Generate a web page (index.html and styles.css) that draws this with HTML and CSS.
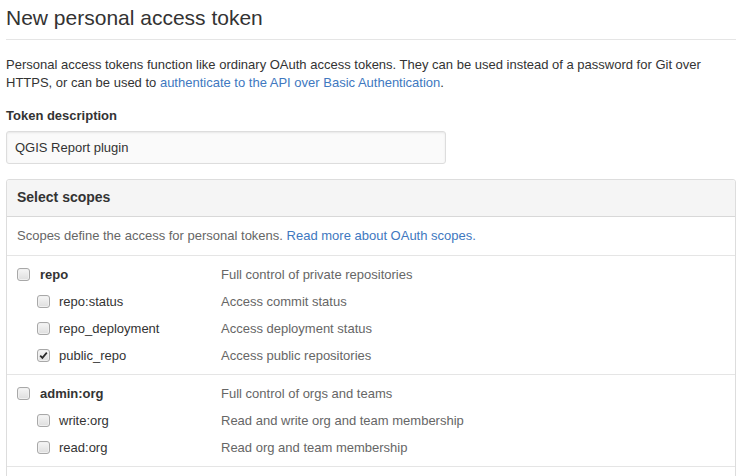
FILE: index.html
```html
<!DOCTYPE html>
<html lang="en">
<head>
<meta charset="utf-8">
<title>New personal access token</title>
<link rel="stylesheet" href="styles.css">
</head>
<body>
<div class="page">
  <h1 class="subhead">New personal access token</h1>
  <p class="intro">Personal access tokens function like ordinary OAuth access tokens. They can be used instead of a password for Git over HTTPS, or can be used to <a href="#">authenticate to the API over Basic Authentication</a>.</p>

  <label class="field-label" for="desc">Token description</label>
  <input class="field-input" id="desc" type="text" value="QGIS Report plugin">

  <div class="panel">
    <div class="panel-head">Select scopes</div>
    <div class="panel-note">Scopes define the access for personal tokens. <a href="#">Read more about OAuth scopes.</a></div>

    <div class="scope-group">
      <div class="scope-row">
        <span class="scope-name top"><span class="cb"></span>repo</span>
        <span class="scope-desc">Full control of private repositories</span>
      </div>
      <div class="scope-row">
        <span class="scope-name sub"><span class="cb"></span>repo:status</span>
        <span class="scope-desc">Access commit status</span>
      </div>
      <div class="scope-row">
        <span class="scope-name sub"><span class="cb"></span>repo_deployment</span>
        <span class="scope-desc">Access deployment status</span>
      </div>
      <div class="scope-row">
        <span class="scope-name sub"><span class="cb checked"><svg viewBox="0 0 13 13" width="13" height="13"><path d="M3.2 6.6 L5.4 8.9 L9.8 3.6" fill="none" stroke="#2a2a2a" stroke-width="1.7"/></svg></span>public_repo</span>
        <span class="scope-desc">Access public repositories</span>
      </div>
    </div>

    <div class="scope-group">
      <div class="scope-row">
        <span class="scope-name top"><span class="cb"></span>admin:org</span>
        <span class="scope-desc">Full control of orgs and teams</span>
      </div>
      <div class="scope-row">
        <span class="scope-name sub"><span class="cb"></span>write:org</span>
        <span class="scope-desc">Read and write org and team membership</span>
      </div>
      <div class="scope-row">
        <span class="scope-name sub"><span class="cb"></span>read:org</span>
        <span class="scope-desc">Read org and team membership</span>
      </div>
    </div>

    <div class="scope-group scope-more"></div>
  </div>
</div>
</body>
</html>
```

FILE: styles.css
```css
html { overflow: hidden; }
body {
  margin: 0;
  background: #fff;
  color: #333;
  font-family: "Liberation Sans", Arial, sans-serif;
  font-size: 13px;
  line-height: 18px;
}
a { color: #4078c0; text-decoration: none; }

.page {
  width: 730px;
  padding-left: 6px;
}

.subhead {
  margin: 0;
  padding: 2px 0 5px;
  font-size: 21px;
  font-weight: normal;
  line-height: 32px;
  color: #333;
  border-bottom: 1px solid #e5e5e5;
}

.intro {
  margin: 16px 0 15px;
}

.field-label {
  display: block;
  font-weight: bold;
  margin-bottom: 6px;
}

.field-input {
  display: block;
  box-sizing: border-box;
  width: 440px;
  height: 33px;
  margin: 0;
  padding: 0 8px;
  font-family: inherit;
  font-size: 13px;
  color: #333;
  background: #fafafa;
  border: 1px solid #ddd;
  border-radius: 3px;
  box-shadow: inset 0 1px 2px rgba(0,0,0,0.075);
  outline: none;
}

.panel {
  margin-top: 15px;
  border: 1px solid #ddd;
  border-radius: 3px;
}

.panel-head {
  padding: 9px 10px 11px;
  font-size: 14px;
  font-weight: bold;
  line-height: 16px;
  background: #f5f5f5;
  border-bottom: 1px solid #d8d8d8;
  border-radius: 3px 3px 0 0;
}

.panel-note {
  padding: 10px;
  color: #666;
}

.scope-group {
  border-top: 1px solid #e5e5e5;
  padding: 5px 10px;
}

.scope-more {
  height: 30px;
}

.scope-row {
  display: grid;
  grid-template-columns: 204px 1fr;
  line-height: 27px;
}

.scope-name {
  display: flex;
  align-items: center;
  color: #333;
}
.scope-name.top { font-weight: bold; }
.scope-name.sub { padding-left: 20px; }

.scope-desc { color: #666; }

.cb {
  box-sizing: border-box;
  width: 13px;
  height: 13px;
  margin-right: 10px;
  border: 1px solid #a8a8a8;
  border-radius: 3px;
  background: linear-gradient(#f6f6f6, #dedede);
  box-shadow: inset 0 0 0 1px #f0f0f0;
  position: relative;
}
.scope-name.sub .cb { margin-right: 9px; }
.cb svg {
  position: absolute;
  left: -1px;
  top: -1px;
}
```
